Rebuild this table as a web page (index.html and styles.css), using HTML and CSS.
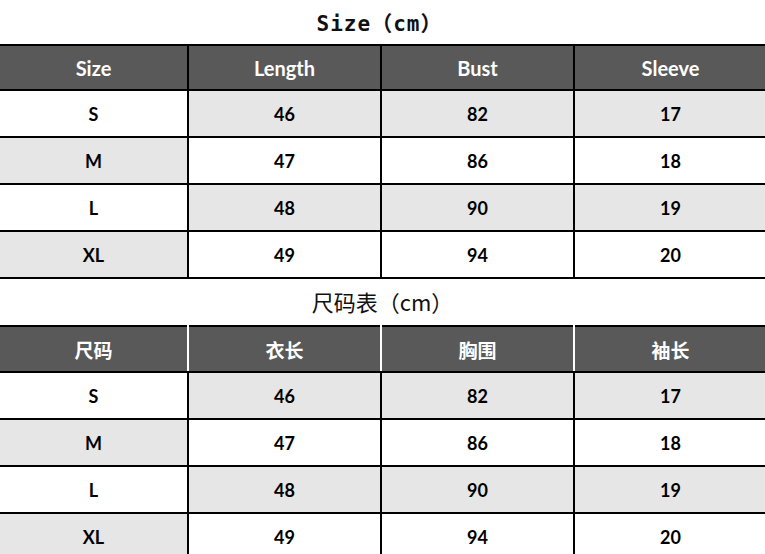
FILE: index.html
```html
<!DOCTYPE html>
<html lang="zh">
<head>
<meta charset="utf-8">
<title>Size chart</title>
<link rel="stylesheet" href="styles.css">
</head>
<body>
<div class="page">
  <h1 class="title title-en">Size（cm）</h1>
  <table class="chart chart-en">
    <colgroup><col class="c1"><col class="c2"><col class="c2"><col class="c2"></colgroup>
    <thead>
      <tr><th>Size</th><th>Length</th><th>Bust</th><th>Sleeve</th></tr>
    </thead>
    <tbody>
      <tr class="odd"><td>S</td><td>46</td><td>82</td><td>17</td></tr>
      <tr class="even"><td>M</td><td>47</td><td>86</td><td>18</td></tr>
      <tr class="odd"><td>L</td><td>48</td><td>90</td><td>19</td></tr>
      <tr class="even"><td>XL</td><td>49</td><td>94</td><td>20</td></tr>
    </tbody>
  </table>
  <h2 class="title title-cn">尺码表（cm）</h2>
  <table class="chart chart-cn">
    <colgroup><col class="c1"><col class="c2"><col class="c2"><col class="c2"></colgroup>
    <thead>
      <tr><th>尺码</th><th>衣长</th><th>胸围</th><th>袖长</th></tr>
    </thead>
    <tbody>
      <tr class="odd"><td>S</td><td>46</td><td>82</td><td>17</td></tr>
      <tr class="even"><td>M</td><td>47</td><td>86</td><td>18</td></tr>
      <tr class="odd"><td>L</td><td>48</td><td>90</td><td>19</td></tr>
      <tr class="even"><td>XL</td><td>49</td><td>94</td><td>20</td></tr>
    </tbody>
  </table>
</div>
</body>
</html>
```
FILE: styles.css
```css
html, body {
  margin: 0;
  padding: 0;
  background: #ffffff;
}
body {
  overflow: hidden;
  width: 765px;
  height: 554px;
}
.page {
  width: 765px;
}
.title {
  margin: 0;
  display: flex;
  align-items: center;
  justify-content: center;
  color: #111111;
}
.title-en {
  height: 44px;
  font-family: "DejaVu Sans Mono", "Noto Sans CJK SC", monospace;
  font-weight: 700;
  font-size: 21px;
  letter-spacing: 1px;
  padding-right: 6px;
  box-sizing: border-box;
}
.title-cn {
  height: 46px;
  font-family: "Noto Sans CJK SC", sans-serif;
  font-weight: 400;
  font-size: 22px;
  padding-bottom: 2px;
  box-sizing: border-box;
}
.chart {
  border-collapse: collapse;
  table-layout: fixed;
  width: 767px;
  font-family: Lato, "Noto Sans CJK SC", sans-serif;
  font-weight: 700;
  font-size: 18px;
  color: #000000;
}
.c1 { width: 188px; }
.c2 { width: 193px; }
.chart th,
.chart td {
  text-align: center;
  padding: 0;
  border: 2px solid #000000;
}
.chart tr > :first-child { border-left: 0; }
.chart th {
  height: 43px;
  background: #595959;
  color: #ffffff;
  font-size: 20px;
  font-weight: 700;
}
.chart td {
  height: 45px;
}
.chart-cn th {
  height: 44px;
  font-size: 19px;
  border-left-color: #ffffff;
  border-right-color: #ffffff;
}
.chart tr.odd td { background: #e6e6e6; }
.chart tr.odd td:first-child { background: #ffffff; }
.chart tr.even td { background: #ffffff; }
.chart tr.even td:first-child { background: #e6e6e6; }
```
